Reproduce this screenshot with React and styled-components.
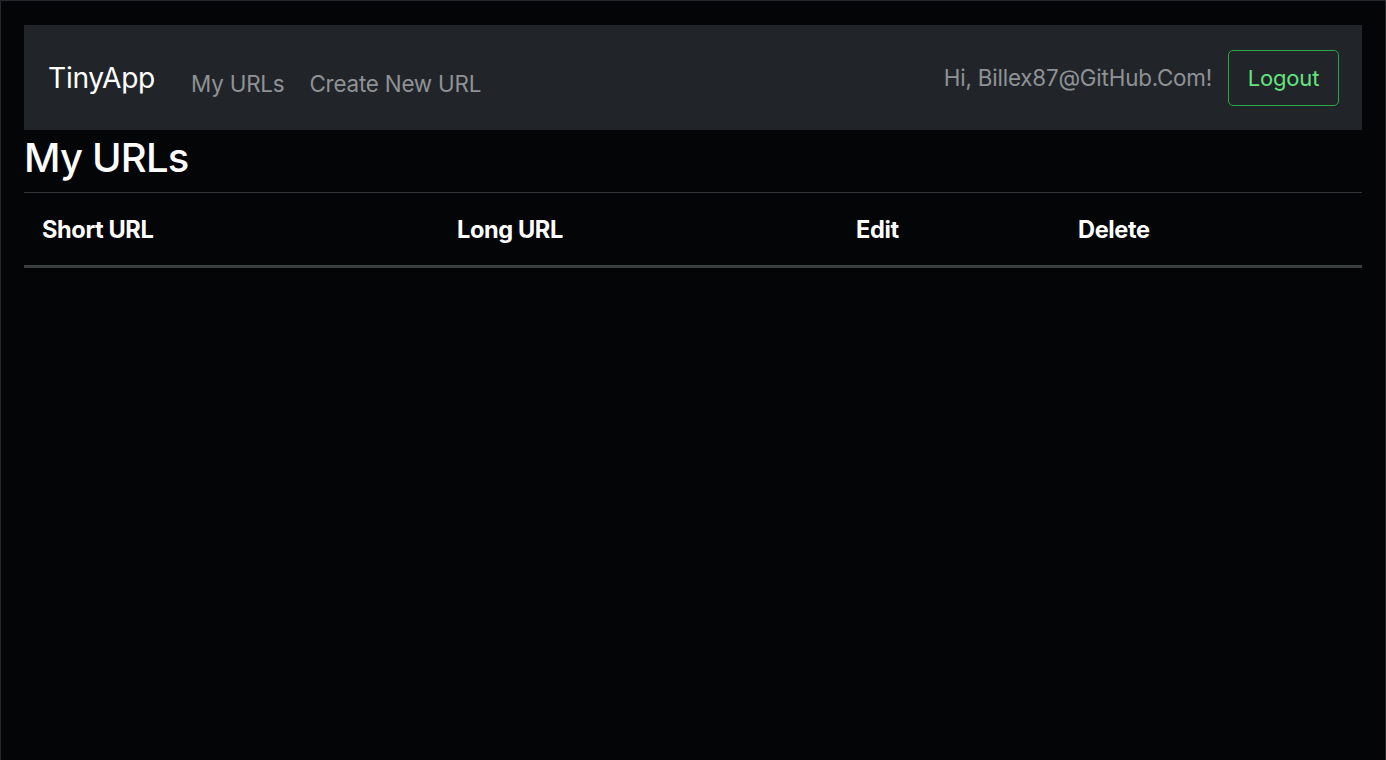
import styled, { createGlobalStyle } from "styled-components";

const GlobalStyle = createGlobalStyle`
  html, body {
    margin: 0;
    padding: 0;
    background: #040507;
  }
  body {
    font-family: Inter, "Liberation Sans", sans-serif;
    color: #fff;
  }
`;

const Page = styled.div`
  box-sizing: border-box;
  min-height: 760px;
  padding: 24px 23px 0 23px;
  border: 1px solid #26292c;
  border-bottom: none;
  background: #040507;
`;

const Navbar = styled.nav`
  display: flex;
  align-items: center;
  justify-content: space-between;
  height: 105px;
  padding: 0 23px 0 24px;
  background: #212529;
`;

const NavLeft = styled.div`
  display: flex;
  align-items: center;
`;

const Brand = styled.a`
  font-size: 28.2px;
  color: #fff;
  text-decoration: none;
  margin-right: 36px;
  letter-spacing: -0.3px;
`;

const NavLink = styled.a`
  font-size: 22.4px;
  color: #8f9295;
  text-decoration: none;
  margin-right: 25px;
  padding-top: 12px;
  letter-spacing: -0.2px;
`;

const NavRight = styled.div`
  display: flex;
  align-items: center;
  gap: 16px;
`;

const Greeting = styled.span`
  font-size: 22.4px;
  color: #8f9295;
  letter-spacing: -0.2px;
`;

const LogoutButton = styled.button`
  box-sizing: border-box;
  width: 111px;
  height: 56px;
  border: 1px solid #28a745;
  border-radius: 5px;
  background: transparent;
  color: #63e47f;
  font-family: inherit;
  font-size: 22px;
  letter-spacing: -0.2px;
  cursor: pointer;
`;

const Title = styled.h1`
  margin: 0;
  padding: 6px 0 12px;
  font-size: 40px;
  font-weight: 500;
  line-height: 44px;
  letter-spacing: -0.8px;
  color: #fff;
`;

const Table = styled.table`
  width: 100%;
  border-collapse: collapse;
  table-layout: fixed;
`;

const HeadCell = styled.th`
  box-sizing: border-box;
  width: ${(p) => p.w}px;
  height: 74px;
  padding: 0 18px;
  text-align: left;
  font-size: 23.6px;
  font-weight: 700;
  letter-spacing: -0.4px;
  color: #fff;
  border-top: 1px solid #333638;
  border-bottom: 3px solid #3a4040;
`;

const columns = [
  { label: "Short URL", w: 415 },
  { label: "Long URL", w: 399 },
  { label: "Edit", w: 222 },
  { label: "Delete", w: 302 },
];

export default function App() {
  return (
    <>
      <GlobalStyle />
      <Page>
        <Navbar>
          <NavLeft>
            <Brand href="#">TinyApp</Brand>
            <NavLink href="#">My URLs</NavLink>
            <NavLink href="#">Create New URL</NavLink>
          </NavLeft>
          <NavRight>
            <Greeting>Hi, Billex87@GitHub.Com!</Greeting>
            <LogoutButton>Logout</LogoutButton>
          </NavRight>
        </Navbar>
        <Title>My URLs</Title>
        <Table>
          <thead>
            <tr>
              {columns.map((c) => (
                <HeadCell key={c.label} w={c.w}>
                  {c.label}
                </HeadCell>
              ))}
            </tr>
          </thead>
          <tbody />
        </Table>
      </Page>
    </>
  );
}
